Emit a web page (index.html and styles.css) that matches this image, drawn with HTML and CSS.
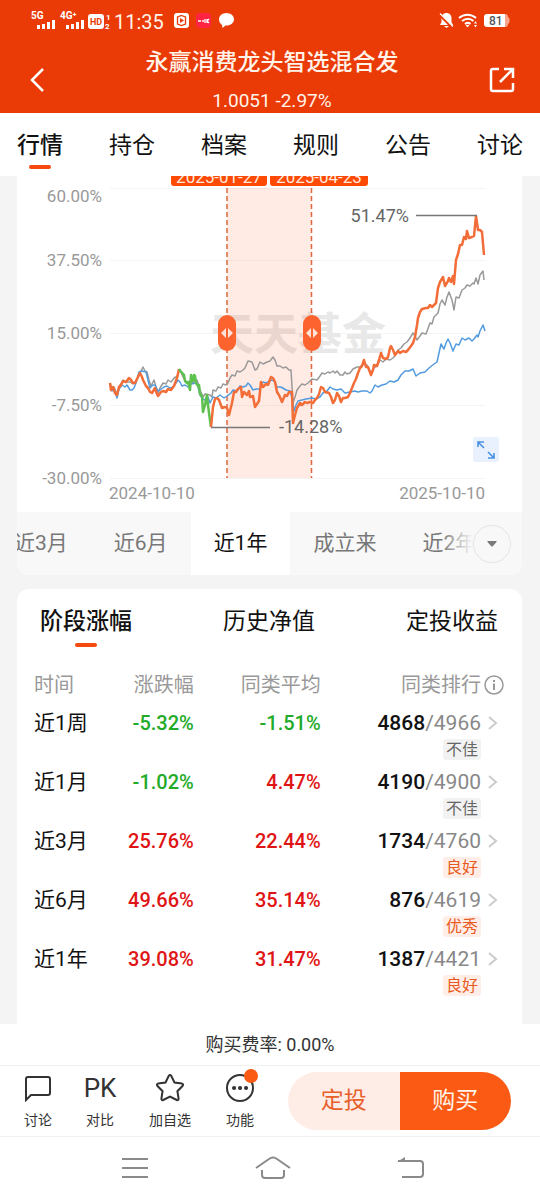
FILE: index.html
```
<!DOCTYPE html>
<html lang="zh-CN">
<head>
    <meta charset="UTF-8">
    <meta name="viewport" content="width=device-width, initial-scale=1.0">
    <title>永赢消费龙头智选混合发</title>
    <link rel="stylesheet" href="styles.css">
</head>
<body>
    <header class="header">
        <div class="status-bar">
            <div class="status-group">
                <svg class="status-left" width="80" height="20" viewBox="0 0 80 20" fill="#fff">
                    <text x="0" y="8" class="net-text">5G</text>
                    <path d="M6 14h3v4h-3zM11 13h3v5h-3zM16 11h3v7h-3zM21 9h3v9h-3z"/>
                    <text x="29" y="8" class="net-text">4G⁺</text>
                    <path d="M35 14h3v4h-3zM40 13h3v5h-3zM45 11h3v7h-3zM50 9h3v9h-3z"/>
                    <rect x="57" y="3" width="16" height="15" rx="3"/>
                    <text x="59" y="14" class="hd-text">HD</text>
                    <text x="75" y="9" class="sim-text">1</text>
                    <text x="74" y="18" class="sim-text">2</text>
                </svg>
                <span class="clock">11:35</span>
                <svg class="status-apps" width="62" height="18" viewBox="0 0 62 18">
                    <rect x="1" y="1" width="15" height="15" rx="3" fill="#fff"/>
                    <path d="M8.500 3.500l4 1.500v7l-4 1.500-4-1.500v-7z" fill="none" stroke="#ea3a05" stroke-width="1.300"/>
                    <path d="M7 6l4 2.500-4 2.500z" fill="#ea3a05"/>
                    <rect x="23" y="1" width="15" height="15" rx="4" fill="#ff2442"/>
                    <path d="M25 9h3M29 9h2M32 7v4M34 7v4M36 7l-2 2 2 2" fill="none" stroke="#fff" stroke-width="1.3"/>
                    <path d="M53.500 1c4.200 0 7.500 2.800 7.500 6.300s-3.300 6.300-7.500 6.300l-1 0-3 2.400-.5-3.100c-2-1.200-3-3.300-3-5.600 0-3.500 3.300-6.300 7.500-6.300z" fill="#fff"/>
                </svg>
            </div>
            <svg width="72" height="18" viewBox="0 0 72 18" fill="#fff">
                <path d="M7.500 1c3 0 5 2.200 5 5v4l1.500 3h-13l1.500-3v-4c0-2.800 2-5 5-5zM5 14h5l-2.500 2z"/>
                <path d="M0 2l14 14" stroke="#ea3a05" stroke-width="3"/>
                <path d="M1 1.500l13 13" stroke="#fff" stroke-width="1.300"/>
                <path d="M20 6c5-4.500 12-4.500 17 0M23 9c4-3 8-3 11.500 0M26 12c2-1.600 3.600-1.600 5.500 0" fill="none" stroke="#fff" stroke-width="2"/>
                <path d="M26.500 13l2 2.500 2-2.500zM35 11.500l1.500-2.500 1.500 2.500zM35 13l1.500 2.500 1.500-2.500z"/>
                <path d="M65 2h1q3 0 3 3l1.500 1.500v4l-1.500 1.500q0 3-3 3h-1z" fill="#f9a58d"/>
                <path d="M48 2h18v13h-18q-3 0-3-3v-7q0-3 3-3z"/>
                <text x="50" y="13" class="battery-text">81</text>
            </svg>
        </div>
        <div class="title-bar">
            <button class="icon-button" aria-label="返回">
                <svg width="16" height="26" viewBox="0 0 16 26"><path d="M14 2L3 13l11 11" fill="none" stroke="#fff" stroke-width="2.500"/></svg>
            </button>
            <div class="title-text">
                <h1>永赢消费龙头智选混合发</h1>
                <p>1.0051 -2.97%</p>
            </div>
            <button class="icon-button" aria-label="分享">
                <svg width="26" height="26" viewBox="0 0 26 26" fill="none" stroke="#fff" stroke-width="2.500"><path d="M10 2h-6q-2 0-2 2v18q0 2 2 2h18q2 0 2-2v-6M11 15l12-12M15 2h9v9"/></svg>
            </button>
        </div>
    </header>

    <nav class="main-tabs">
        <a href="#" class="active">行情</a>
        <a href="#">持仓</a>
        <a href="#">档案</a>
        <a href="#">规则</a>
        <a href="#">公告</a>
        <a href="#">讨论</a>
    </nav>

    <main>
        <section class="card chart-card">
            <!-- Performance chart -->
            <svg class="chart" viewBox="17 176 505 336">
                <path class="grid-line" d="M110 188.500H485M110 260.500H485M110 333.500H485M110 405.500H485M110 478.500H485"/>
                <text x="210" y="350" class="watermark">天天基金</text>
                <rect x="227" y="188" width="84" height="290" class="range"/>

                <g class="axis-text">
                    <text x="102" y="202" text-anchor="end">60.00%</text>
                    <text x="102" y="266" text-anchor="end">37.50%</text>
                    <text x="102" y="339" text-anchor="end">15.00%</text>
                    <text x="102" y="411" text-anchor="end">-7.50%</text>
                    <text x="102" y="484" text-anchor="end">-30.00%</text>
                    <text x="109" y="499">2024-10-10</text>
                    <text x="485" y="499" text-anchor="end">2025-10-10</text>
                </g>

                <path class="range-edge" d="M227 188V478M311.500 188V478"/>

                <polyline class="line line-gray" points="110,383 112,389 114,387 117,394 119,387 123,380 126,382 130,382 133,384 136,381 139,375 141,371 143,367 145,371 147,372 149,380 151,386 154,380 156,387 158,393 160,388 163,383 166,384 168,380 171,382 175,377 177,378 179,370 181,372 183,377 187,383 190,381 193,383 197,380 200,390 203,397 205,394 210,395 212,397 213,390 216,391 218,387 221,388 223,384 226,385 228,383 230,378 232,375 235,376 237,371 240,372 243,370 245,368 248,361 252,362 255,370 257,369 260,362 263,364 267,362 270,361 273,357 275,360 277,366 280,366 283,368 286,367 289,370 291,370 293,403 295,397 297,390 300,386 302,384 305,385 308,383 312,379 317,380 320,376 322,373 325,374 328,372 330,373 333,371 335,373 337,371 340,375 343,375 345,372 347,374 350,373 353,369 357,367 360,367 363,364 367,365 371,373 374,368 377,366 380,360 383,362 386,359 390,360 393,358 395,356 398,350 401,348 404,344 407,342 410,338 413,333 415,336 417,340 420,336 422,333 426,334 430,323 432,324 434,317 438,313 440,304 442,300 445,305 447,297 449,292 452,300 454,310 456,297 459,298 462,290 465,288 467,285 470,286 473,283 474,284 476,278 478,284 480,275 483,271 484,280"/>
                <polyline class="line line-blue" points="110,384 112,391 114,389 117,398 119,389 122,385 125,387 127,385 130,390 132,390 134,388 136,383 139,372 142,371 146,372 148,380 150,388 153,385 155,385 158,391 160,390 164,387 167,386 170,388 173,387 176,383 178,380 180,382 182,386 185,385 188,387 191,384 197,383 200,395 203,399 205,400 208,397 210,403 213,397 216,398 220,395 224,398 227,396 231,393 233,390 237,391 240,386 243,387 246,386 248,383 250,385 253,390 256,389 260,389 263,382 266,383 269,381 272,380 275,382 277,387 281,387 286,390 290,391 292,398 294,411 296,405 298,401 302,400 306,399 312,398 316,399 320,397 323,393 327,391 330,387 333,389 337,390 341,389 345,393 350,392 355,391 358,392 362,391 367,391 370,393 372,391 375,385 378,387 382,385 386,384 390,381 394,382 398,380 401,375 405,371 409,371 413,369 416,376 420,373 425,372 429,368 434,364 437,362 439,353 441,344 444,349 446,343 448,339 450,343 453,351 456,344 459,345 462,338 465,340 469,338 472,341 474,339 477,335 478,337 480,331 483,325 485,331"/>
                <polyline class="line line-fund" points="110,383 111,390 113,387 115,393 117,395 119,387 121,385 123,381 126,382 129,378 131,380 133,383 135,383 137,379 140,373 142,377 143,380 146,386 148,388 150,392 152,393 155,388 157,394 158,396 161,392 163,391 166,392 168,389 171,390 174,386 177,378 179,369"/>
                <polyline class="line line-drawdown" points="179,369 182,373 184,375 185,381 187,383 188,382 190,390 191,375 193,381 194,375 195,376 196,383 198,386 199,385 200,394 202,396 203,412 205,405 207,395 208,405 209,413 211,427"/>
                <polyline class="line line-fund" points="211,427 213,407 215,399 217,398 219,400 222,408 225,407 227,408 229,415 232,403 234,392 236,392 238,389 241,387 242,397 244,392 247,395 249,391 250,397 253,396 255,407 257,404 259,401 261,382 263,387 266,384 268,385 271,377 273,378 275,382 277,392 279,395 282,402 285,395 287,396 289,392 292,392 293,423 295,415 297,408 300,403 302,405 305,402 307,403 310,402 313,403 315,400 317,398 319,394 321,387 323,388 325,392 329,393 331,397 333,403 335,400 337,393 339,396 341,402 343,398 345,398 348,397 350,393 352,388 354,383 356,379 358,373 360,368 362,366 364,360 366,367 368,367 371,375 373,370 374,365 377,366 379,360 381,353 383,358 386,359 388,357 390,348 391,346 393,350 395,355 398,351 400,353 403,351 406,352 408,350 411,346 413,343 415,337 417,325 418,318 420,312 422,309 426,308 428,308 430,305 432,307 434,305 436,303 438,288 440,282 443,277 445,286 448,281 449,278 451,282 453,276 454,284 456,260 458,254 460,245 462,245 464,237 466,239 467,231 469,238 472,237 474,236 476,216 478,230 480,230 482,232 484,255"/>

                <path class="callout" d="M416 215.500H477M211 427.500H270"/>
                <text x="409" y="222" text-anchor="end" class="callout-text">51.47%</text>
                <text x="279" y="433" class="callout-text">-14.28%</text>

                <!-- Range labels and handles -->
                <path d="M171 150h96v33q0 3-3 3h-90q-3 0-3-3zM270 150h98v33q0 3-3 3h-92q-3 0-3-3z" fill="#ff4a05"/>
                <text x="219" y="183" class="range-text">2025-01-27</text>
                <text x="319" y="183" class="range-text">2025-04-23</text>
                <rect x="218" y="315" width="18" height="36" rx="9" fill="#fd632f"/>
                <rect x="303" y="315" width="18" height="36" rx="9" fill="#fd632f"/>
                <path d="M226 328v10l-5-5zM228 328v10l5-5zM311 328v10l-5-5zM313 328v10l5-5z" fill="#ffe3d8"/>

                <rect x="473" y="437" width="26" height="25" rx="2" fill="#e8f1fd"/>
                <path d="M478 447v-5h6M478 442l6 6M494 453v5h-6M494 458l-6-6" fill="none" stroke="#4a90e2" stroke-width="1.600"/>
            </svg>

            <div class="period-bar">
                <div class="period-track">
                    <button>近3月</button>
                    <button>近6月</button>
                    <button class="active">近1年</button>
                    <button>成立来</button>
                    <button>近2年</button>
                </div>
                <div class="period-more">
                    <button aria-label="更多">
                        <svg width="10" height="6" viewBox="0 0 10 6"><path d="M1 0h8q1 0 .5 1l-3.500 4q-1 1-2 0l-3.500-4q-.5-1 .5-1z" fill="#7a7a7a"/></svg>
                    </button>
                </div>
            </div>
        </section>

        <section class="card stats-card">
            <div class="stats-tabs">
                <a href="#" class="active">阶段涨幅</a>
                <a href="#">历史净值</a>
                <a href="#">定投收益</a>
            </div>
            <table class="stats-table">
                <thead>
                    <tr>
                        <th class="col-time">时间</th>
                        <th class="col-change">涨跌幅</th>
                        <th class="col-average">同类平均</th>
                        <th class="col-rank">
                            <div class="rank">
                                <span>同类排行</span>
                                <svg width="20" height="20" viewBox="0 0 20 20"><circle cx="10" cy="10" r="9" fill="none" stroke="#999" stroke-width="1.500"/><path d="M9 5h2v2h-2zM9 8.500h2v6.500h-2z" fill="#999"/></svg>
                            </div>
                        </th>
                    </tr>
                </thead>
                <tbody>
                    <tr>
                        <td>近1周</td>
                        <td class="down">-5.32%</td>
                        <td class="down">-1.51%</td>
                        <td>
                            <div class="rank">
                                <span><b>4868</b>/4966</span>
                                <svg class="chevron" width="10" height="16" viewBox="0 0 10 16"><path d="M1 2l7 6-7 6"/></svg>
                                <span class="badge">不佳</span>
                            </div>
                        </td>
                    </tr>
                    <tr>
                        <td>近1月</td>
                        <td class="down">-1.02%</td>
                        <td class="up">4.47%</td>
                        <td>
                            <div class="rank">
                                <span><b>4190</b>/4900</span>
                                <svg class="chevron" width="10" height="16" viewBox="0 0 10 16"><path d="M1 2l7 6-7 6"/></svg>
                                <span class="badge">不佳</span>
                            </div>
                        </td>
                    </tr>
                    <tr>
                        <td>近3月</td>
                        <td class="up">25.76%</td>
                        <td class="up">22.44%</td>
                        <td>
                            <div class="rank">
                                <span><b>1734</b>/4760</span>
                                <svg class="chevron" width="10" height="16" viewBox="0 0 10 16"><path d="M1 2l7 6-7 6"/></svg>
                                <span class="badge good">良好</span>
                            </div>
                        </td>
                    </tr>
                    <tr>
                        <td>近6月</td>
                        <td class="up">49.66%</td>
                        <td class="up">35.14%</td>
                        <td>
                            <div class="rank">
                                <span><b>876</b>/4619</span>
                                <svg class="chevron" width="10" height="16" viewBox="0 0 10 16"><path d="M1 2l7 6-7 6"/></svg>
                                <span class="badge good">优秀</span>
                            </div>
                        </td>
                    </tr>
                    <tr>
                        <td>近1年</td>
                        <td class="up">39.08%</td>
                        <td class="up">31.47%</td>
                        <td>
                            <div class="rank">
                                <span><b>1387</b>/4421</span>
                                <svg class="chevron" width="10" height="16" viewBox="0 0 10 16"><path d="M1 2l7 6-7 6"/></svg>
                                <span class="badge good">良好</span>
                            </div>
                        </td>
                    </tr>
                </tbody>
            </table>
        </section>
    </main>

    <footer>
        <p class="fee">购买费率: 0.00%</p>

        <div class="action-bar">
            <button class="tool">
                <svg width="28" height="30" viewBox="0 0 28 30"><path d="M2 28V7q0-2 2-2h20q2 0 2 2v14q0 2-2 2H7z"/></svg>
                <span>讨论</span>
            </button>
            <button class="tool">
                <strong>PK</strong>
                <span>对比</span>
            </button>
            <button class="tool tool-wide">
                <svg width="30" height="30" viewBox="0 0 30 30"><path d="M13.800 3.800q1.200-1.600 2.400 0l3.300 6.700 7.400 1.100q1.900.5.800 2.200l-5.300 5.400 1.200 7.400q0 2-1.800 1.400l-6.800-3.500-6.800 3.500q-1.800.6-1.800-1.400l1.200-7.400-5.300-5.400q-1.100-1.700.8-2.200l7.400-1.100z"/></svg>
                <span>加自选</span>
            </button>
            <button class="tool">
                <svg width="30" height="30" viewBox="0 0 30 30"><circle cx="15" cy="16" r="13"/><path d="M9 16h.1M15 16h.1M21 16h.1" stroke-width="4" stroke-linecap="round"/></svg>
                <span>功能</span>
                <i class="dot"></i>
            </button>
            <div class="buy-buttons">
                <button class="invest">定投</button>
                <button class="buy">购买</button>
            </div>
        </div>

        <div class="system-nav">
            <button aria-label="菜单"><svg width="36" height="24" viewBox="0 0 36 24"><path d="M5 3h26M5 12h26M5 21h26"/></svg></button>
            <button aria-label="主页"><svg width="36" height="24" viewBox="0 0 36 24"><path d="M1 12L14 3q4-3 8 0l13 9M7 14v5q0 3 3 3h16q3 0 3-3v-5"/></svg></button>
            <button aria-label="后退"><svg width="36" height="24" viewBox="0 0 36 24"><path d="M5 5h22q3 0 3 3v10q0 3-3 3h-18"/><path d="M4 6l8-5v5z" fill="#8a8a8a" stroke="none"/></svg></button>
        </div>
    </footer>
</body>
</html>
```

FILE: styles.css
```
* {
    box-sizing: border-box;
}

body {
    display: flex;
    flex-direction: column;
    min-height: 100vh;
    margin: 0;
    font-family: Roboto, "Noto Sans CJK SC", sans-serif;
    color: #111;
    background-color: #f4f4f4;
}

button {
    padding: 0;
    border: none;
    background: none;
    font-family: inherit;
    color: inherit;
    cursor: pointer;
}

a {
    color: inherit;
    text-decoration: none;
}

svg {
    display: block;
}

/* Header */
.header {
    background-color: #ea3a05;
    color: #fff3ea;
}

.status-bar {
    display: flex;
    justify-content: space-between;
    align-items: center;
    height: 42px;
    padding: 0 29px 0 31px;
}

.status-group {
    display: flex;
    align-items: center;
}

.clock {
    margin: 0 9px 0 3px;
    padding-top: 2px;
    font-size: 20px;
    line-height: 24px;
}

.net-text {
    font-size: 10px;
    font-weight: 700;
}

.hd-text {
    font-size: 9px;
    font-weight: 700;
    fill: #ea3a05;
}

.sim-text {
    font-size: 8px;
    font-weight: 700;
}

.battery-text {
    font-size: 12px;
    font-weight: 500;
    fill: #555;
}

.title-bar {
    display: flex;
    justify-content: space-between;
    align-items: center;
    height: 71px;
    padding: 0 25px 0 29px;
}

.icon-button {
    display: flex;
    width: 26px;
    padding-top: 5px;
}

.title-text {
    padding-top: 8px;
    text-align: center;
}

.title-text h1 {
    margin: 0;
    font-size: 23px;
    line-height: 38px;
    font-weight: 500;
}

.title-text p {
    margin: 0;
    font-size: 19px;
    line-height: 38px;
}

.main-tabs {
    display: flex;
    justify-content: space-between;
    padding: 2px 17px 0;
    background-color: #fff;
    font-size: 23px;
    line-height: 61px;
}

.active {
    font-weight: 500;
}

.main-tabs a,
.stats-tabs a {
    position: relative;
}

.main-tabs .active::after,
.stats-tabs .active::after {
    content: "";
    position: absolute;
    left: 50%;
    bottom: 7px;
    width: 22px;
    height: 4px;
    margin-left: -11px;
    border-radius: 2px;
    background-color: #f4490f;
}

main {
    display: flex;
    flex: 1;
    flex-direction: column;
    gap: 14px;
    padding: 0 18px 0 17px;
}

.card {
    overflow: hidden;
    background-color: #fff;
}

/* Chart */
.chart-card {
    border-radius: 0 0 12px 12px;
}

.chart {
    width: 100%;
}

.grid-line {
    stroke: #f4f4f4;
}

.watermark {
    font-size: 44px;
    font-weight: 700;
    fill: #e8e8e8;
}

.range {
    fill: #ff4a05;
    fill-opacity: 0.11;
}

.range-edge {
    stroke: #dc6841;
    stroke-width: 1.5;
    stroke-dasharray: 5 3;
}

.axis-text {
    font-size: 17px;
    fill: #999;
}

.line {
    fill: none;
    stroke-linejoin: round;
}

.line-gray {
    stroke: #999;
    stroke-width: 1.5;
}

.line-blue {
    stroke: #539bdf;
    stroke-width: 1.5;
}

.line-fund {
    stroke: #f26d38;
    stroke-width: 2.5;
}

.line-drawdown {
    stroke: #5dc04f;
    stroke-width: 2.5;
}

.callout {
    stroke: #777;
    stroke-width: 1.5;
}

.callout-text {
    font-size: 18px;
    fill: #666;
}

.range-text {
    font-size: 17px;
    fill: #ffe9dc;
    text-anchor: middle;
}

.period-bar {
    display: flex;
    position: relative;
    overflow: hidden;
    background-color: #f8f8f8;
}

/* Scrolled so that the first period is partly out of view */
.period-track {
    display: flex;
    margin-left: -26px;
}

.period-track button {
    flex: none;
    padding: 0 23px;
    font-size: 21px;
    line-height: 63px;
    color: #777;
}

.period-track .active {
    background-color: #fff;
    font-weight: 400;
    color: #111;
}

.period-more {
    position: absolute;
    top: 0;
    right: 0;
    bottom: 0;
    display: flex;
    align-items: center;
    padding: 0 11px 0 32px;
    background: linear-gradient(to right, rgba(248, 248, 248, 0), #f8f8f8 32px);
}

.period-more button {
    display: flex;
    justify-content: center;
    align-items: center;
    width: 38px;
    height: 38px;
    border: 1px solid #e5e5e5;
    border-radius: 50%;
}

/* Statistics */
.stats-card {
    flex: 1;
    padding: 2px 18px 20px 17px;
    border-radius: 12px 12px 0 0;
}

.stats-tabs {
    display: flex;
    justify-content: space-between;
    padding: 0 6px;
    font-size: 23px;
    line-height: 62px;
}

.stats-tabs .active::after {
    bottom: 6px;
}

.stats-table {
    width: 100%;
    margin-top: 17px;
    border-collapse: collapse;
    table-layout: fixed;
}

.stats-table th {
    padding: 0 0 9px;
    font-size: 20px;
    line-height: 30px;
    font-weight: 400;
    color: #999;
    text-align: right;
}

.stats-table td {
    padding: 0 0 8px;
    font-size: 21px;
    line-height: 28px;
    text-align: right;
    vertical-align: top;
}

.stats-table th:first-child,
.stats-table td:first-child {
    text-align: left;
}

.col-time {
    width: 14%;
}

.col-change {
    width: 20%;
}

.col-average {
    width: 27%;
}

.stats-table .up,
.stats-table .down {
    font-size: 20px;
    font-weight: 500;
}

.up {
    color: #df1515;
}

.down {
    color: #22ab28;
}

.rank {
    display: grid;
    grid-template-columns: 1fr 23px;
    align-items: center;
    justify-items: end;
}

.stats-table td .rank {
    color: #888;
}

.rank b {
    font-weight: 500;
    color: #111;
}

.chevron {
    margin-right: 6px;
    fill: none;
    stroke: #ccc;
    stroke-width: 2;
}

.stats-table .badge {
    margin-top: 2px;
    padding: 0 3px;
    border-radius: 3px;
    background-color: #f2f2f2;
    font-size: 16px;
    line-height: 21px;
    color: #666;
}

.stats-table .badge.good {
    background-color: #ffeee8;
    color: #e95a22;
}

/* Footer */
footer {
    background-color: #fff;
}

.fee {
    margin: 0;
    font-size: 18px;
    line-height: 41px;
    text-align: center;
    color: #333;
}

.action-bar {
    display: flex;
    align-items: center;
    padding: 6px 29px 6px 10px;
    border-top: 1px solid #f1f1f1;
    border-bottom: 1px solid #f1f1f1;
}

.tool {
    position: relative;
    display: flex;
    flex-direction: column;
    align-items: center;
    gap: 8px;
    width: 56px;
    margin-right: 6px;
    font-size: 14px;
    line-height: 20px;
    color: #333;
}

.tool-wide {
    width: 72px;
}

.tool svg {
    fill: none;
    stroke: #333;
    stroke-width: 2;
}

.tool strong {
    padding-top: 2px;
    font-size: 26px;
    line-height: 28px;
    font-weight: 400;
}

.dot {
    position: absolute;
    top: -3px;
    right: 10px;
    width: 14px;
    height: 14px;
    border-radius: 50%;
    background-color: #fb5a14;
}

.buy-buttons {
    display: flex;
    flex: 1;
    overflow: hidden;
    margin-left: 14px;
    border-radius: 29px;
}

.buy-buttons button {
    flex: 1;
    font-size: 23px;
    line-height: 58px;
}

.buy-buttons .invest {
    background-color: #fdede6;
    color: #e8602c;
}

.buy-buttons .buy {
    background-color: #fb5a14;
    color: #fff3ea;
}

.system-nav {
    display: flex;
    justify-content: space-between;
    padding: 19px 111px 21px 117px;
}

.system-nav svg {
    fill: none;
    stroke: #8a8a8a;
    stroke-width: 2;
}
```
